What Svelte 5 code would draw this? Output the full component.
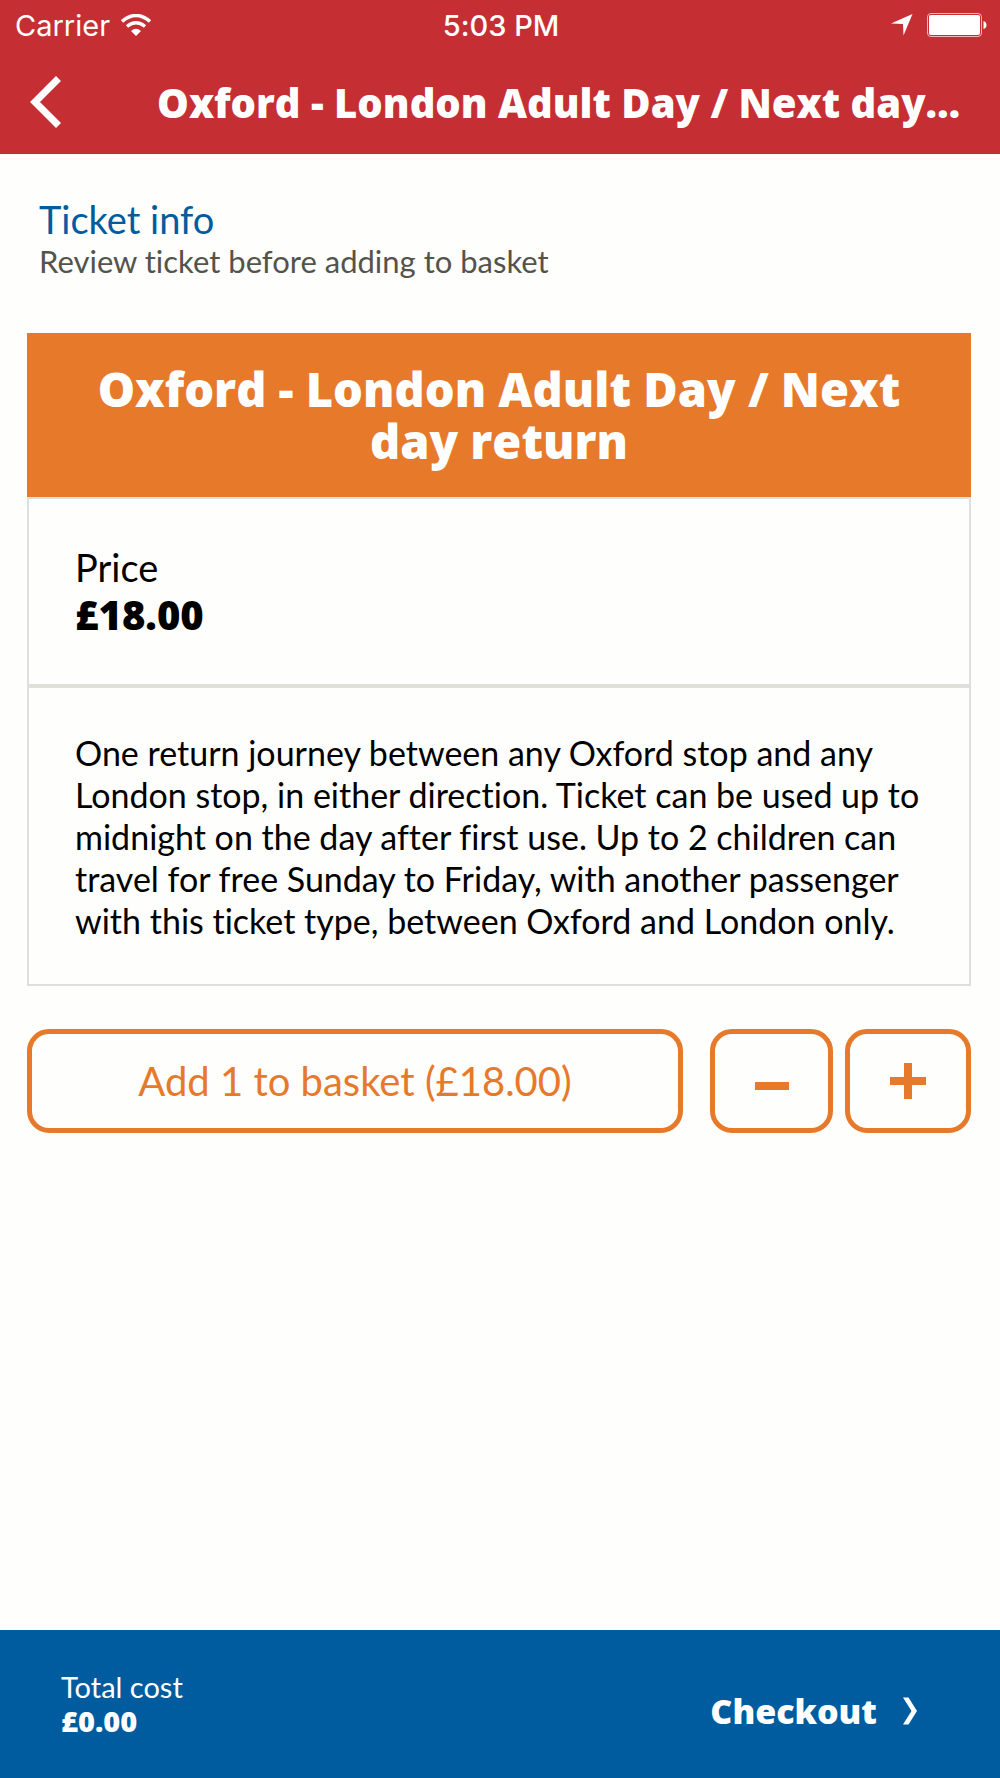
<script lang="ts">
	interface Ticket {
		name: string;
		price: number;
		description: string[];
	}

	const ticket: Ticket = {
		name: 'Oxford - London Adult Day / Next day return',
		price: 18,
		description: [
			'One return journey between any Oxford stop and any',
			'London stop, in either direction. Ticket can be used up to',
			'midnight on the day after first use. Up to 2 children can',
			'travel for free Sunday to Friday, with another passenger',
			'with this ticket type, between Oxford and London only.',
		],
	};

	let quantity = $state(1);
	let total = $state(0);

	const money = (n: number) => `£${n.toFixed(2)}`;
</script>

<div class="screen">
	<header>
		<div class="status">
			<div class="carrier">
				<span>Carrier</span>
				<svg width="30" height="22" viewBox="0 0 30 22" aria-hidden="true">
					<path d="M1 7.5Q15-4.500 29 7.500" fill="none" stroke="#fff" stroke-width="3.500" />
					<path d="M6 12.500Q15 5 24 12.500" fill="none" stroke="#fff" stroke-width="3.500" />
					<path d="M10 17Q15 12.500 20 17L15 22Z" fill="#fff" />
				</svg>
			</div>
			<time>5:03 PM</time>
			<div class="indicators">
				<svg width="22" height="22" viewBox="0 0 22 22" aria-hidden="true">
					<path d="M21.500 0L12.500 21.500L12 10L0 9.500Z" fill="#fff" />
				</svg>
				<svg width="60" height="24" viewBox="0 0 60 24" aria-hidden="true">
					<rect x="0.500" y="0.500" width="54" height="23" rx="3.500" fill="none" stroke="#f0b9bb" />
					<rect x="2" y="2" width="51" height="20" rx="2" fill="#fff" />
					<path d="M56.500 8Q59.500 9 59.500 12T56.500 16Z" fill="#fff" />
				</svg>
			</div>
		</div>
		<div class="nav">
			<button class="back" aria-label="Back">
				<svg width="32" height="52" viewBox="0 0 32 52" aria-hidden="true">
					<path d="M28.500 2.500L5 26L28.500 49.500" fill="none" stroke="#fff" stroke-width="7" />
				</svg>
			</button>
			<h1>Oxford - London Adult Day / Next day…</h1>
		</div>
	</header>

	<main>
		<div class="intro">
			<h2>Ticket info</h2>
			<p>Review ticket before adding to basket</p>
		</div>

		<section class="card">
			<h3>{ticket.name}</h3>
			<div class="price">
				<span>Price</span>
				<strong>{money(ticket.price)}</strong>
			</div>
			<p class="description">
				{#each ticket.description as line}
					{line}<br />
				{/each}
			</p>
		</section>

		<div class="actions">
			<button class="add" onclick={() => (total += quantity * ticket.price)}>
				Add {quantity} to basket ({money(quantity * ticket.price)})
			</button>
			<button class="step minus" aria-label="Remove one" onclick={() => (quantity = Math.max(1, quantity - 1))}>
				<svg width="36" height="36" viewBox="0 0 36 36" aria-hidden="true">
					<path d="M1 23H35" stroke="currentColor" stroke-width="8" />
				</svg>
			</button>
			<button class="step" aria-label="Add one" onclick={() => (quantity += 1)}>
				<svg width="36" height="36" viewBox="0 0 36 36" aria-hidden="true">
					<path d="M0 18H36M18 0V36" stroke="currentColor" stroke-width="8" />
				</svg>
			</button>
		</div>
	</main>

	<footer>
		<div class="total">
			<span>Total cost</span>
			<strong>{money(total)}</strong>
		</div>
		<button class="checkout">
			Checkout
			<svg width="14" height="28" viewBox="0 0 14 28" aria-hidden="true">
				<path d="M0 0.500H5.500L14 14L5.500 27.500H0L8.500 14Z" fill="#fff" />
			</svg>
		</button>
	</footer>
</div>

<style>
	:global(body) {
		margin: 0;
		background: #fefefc;
	}
	.screen {
		display: flex;
		flex-direction: column;
		min-height: 100vh;
		font-family: Lato, sans-serif;
		font-variant-ligatures: none;
		color: #000;
	}
	h1, h2, h3, p {
		margin: 0;
	}
	button {
		padding: 0;
		border: 0;
		background: none;
		color: inherit;
		font-family: inherit;
		cursor: pointer;
	}
	svg {
		display: block;
		flex: none;
	}
	h1, h3, strong, .checkout {
		font-family: 'Open Sans', sans-serif;
		font-weight: 800;
	}

	header {
		background: #c52f33;
		color: #fff;
	}
	.status {
		display: grid;
		grid-template-columns: 1fr auto 1fr;
		align-items: center;
		height: 50px;
		padding: 0 13px 0 15px;
		font-family: Inter, sans-serif;
		font-size: 29px;
	}
	.status time {
		font-weight: 500;
	}
	.carrier {
		display: flex;
		align-items: center;
		gap: 11px;
	}
	.indicators {
		display: flex;
		align-items: center;
		justify-content: flex-end;
		gap: 14px;
	}
	.nav {
		display: flex;
		align-items: center;
		height: 104px;
		padding-left: 30px;
	}
	.back {
		width: 127px;
	}
	h1 {
		font-size: 40px;
		white-space: nowrap;
	}

	main {
		flex: 1;
		padding: 42px 29px 0 27px;
	}
	.intro {
		padding: 0 12px;
	}
	h2 {
		color: #005c9e;
		font-size: 38px;
		font-weight: 400;
		line-height: 46px;
	}
	.intro p {
		color: #53534b;
		font-size: 31px;
		line-height: 38px;
	}
	.card {
		margin-top: 53px;
	}
	h3 {
		padding: 30px 60px;
		background: #e7792b;
		color: #fff;
		font-size: 47px;
		line-height: 52px;
		text-align: center;
	}
	.price,
	.description {
		border: 2px solid #dfdfdc;
		padding: 44px 46px;
	}
	.price {
		display: flex;
		flex-direction: column;
		padding-bottom: 45px;
		font-size: 38px;
		line-height: 48px;
	}
	.price strong {
		font-size: 40px;
	}
	.description {
		padding-bottom: 42px;
		font-size: 34px;
		line-height: 42px;
		white-space: nowrap;
	}
	.actions {
		display: flex;
		gap: 12px;
		margin-top: 43px;
		color: #e7792b;
	}
	.actions button {
		display: flex;
		align-items: center;
		justify-content: center;
		box-sizing: border-box;
		height: 104px;
		border: 5px solid #e7792b;
		border-radius: 22px;
	}
	.actions .add {
		flex: 1;
		font-size: 40px;
	}
	.step {
		width: 126px;
	}
	.minus {
		width: 123px;
		margin-left: 15px;
	}

	footer {
		display: flex;
		align-items: center;
		justify-content: space-between;
		height: 148px;
		padding: 0 83px 0 61px;
		background: #005c9e;
		color: #fff;
	}
	.total {
		display: flex;
		flex-direction: column;
		font-size: 29px;
		line-height: 34px;
	}
	.checkout {
		display: flex;
		align-items: center;
		gap: 26px;
		padding-top: 14px;
		font-size: 34px;
	}
</style>
